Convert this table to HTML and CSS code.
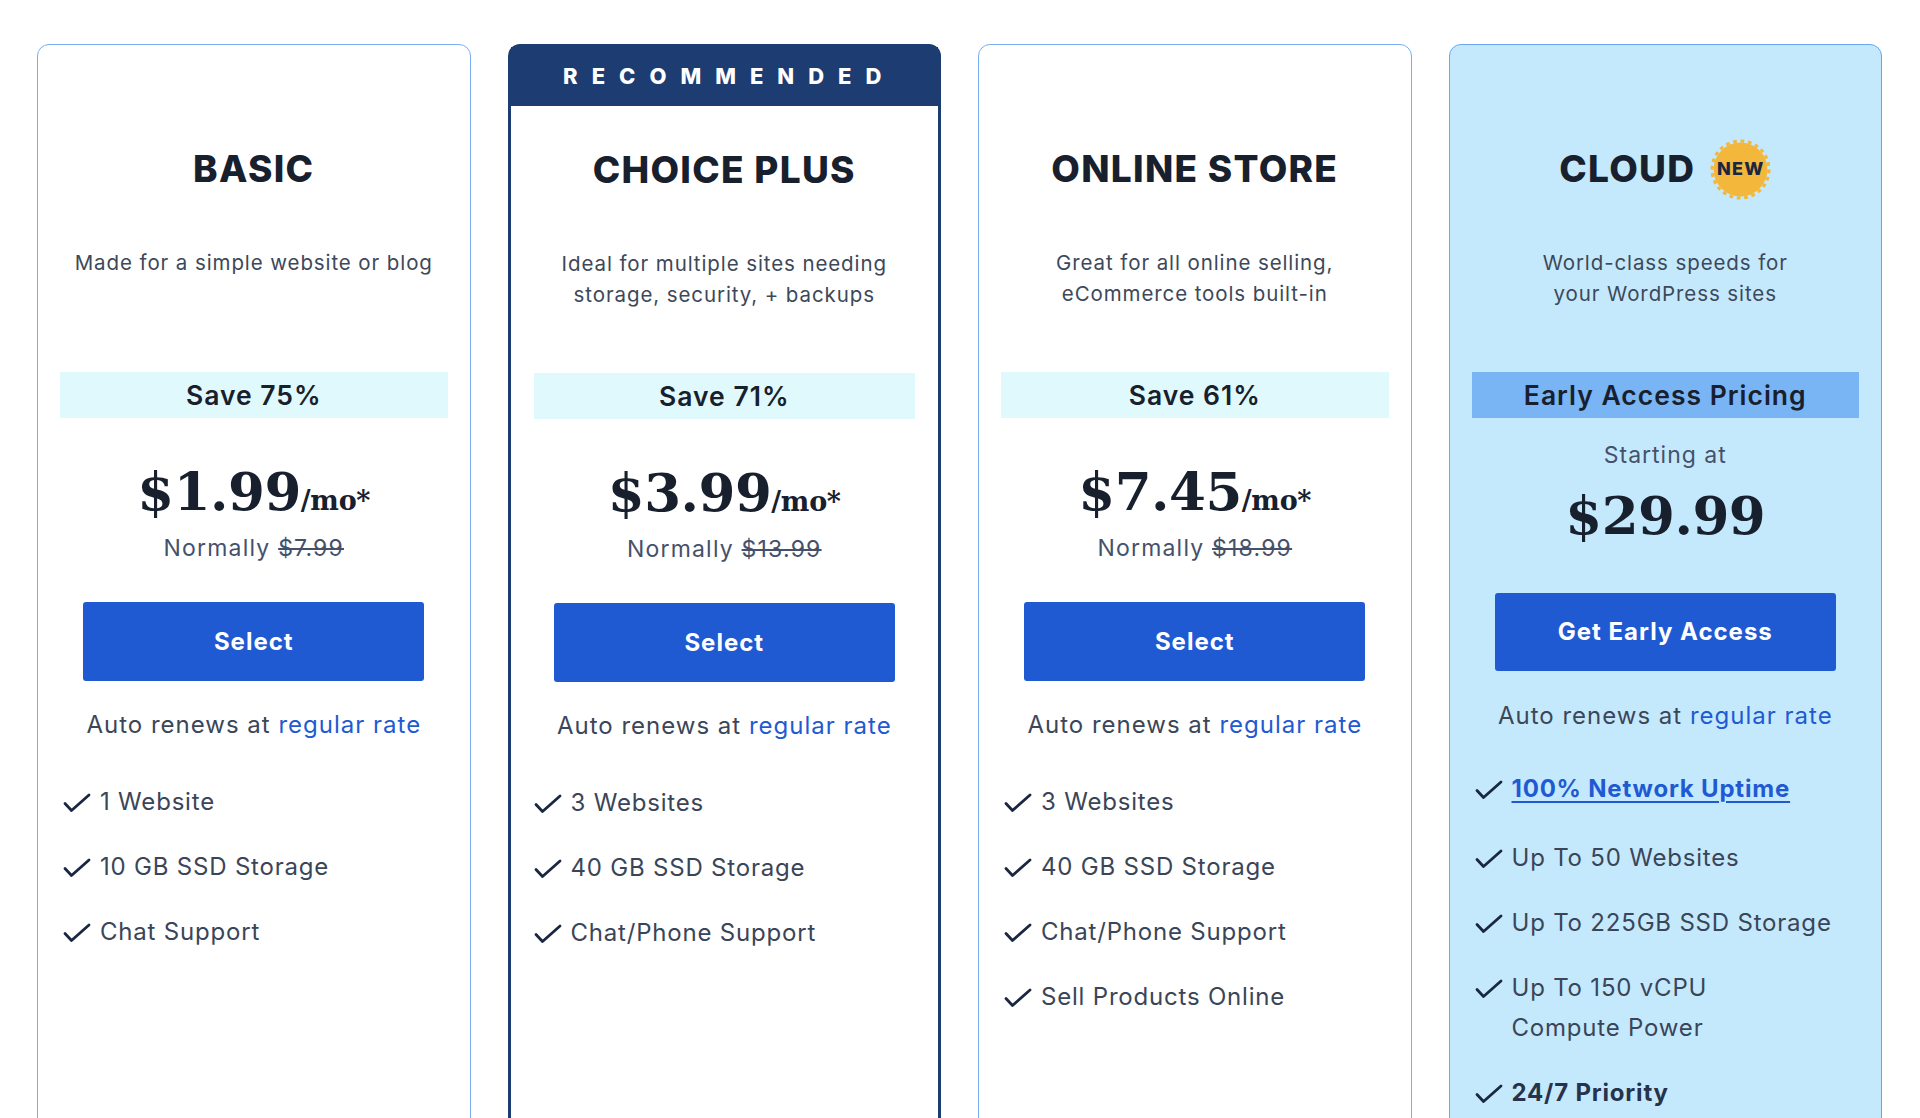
FILE: index.html
```html
<!DOCTYPE html>
<html lang="en">
<head>
<meta charset="utf-8">
<title>Hosting plans</title>
<link rel="stylesheet" href="styles.css">
</head>
<body>
<main class="plans">
  <section class="plan">
    <h2 class="plan-title">BASIC</h2>
    <p class="plan-desc">Made for a simple website or blog</p>
    <div class="plan-save">Save 75%</div>
    <div class="plan-price"><span class="amount">$1.99</span><span class="per">/mo*</span></div>
    <p class="plan-normal">Normally <s>$7.99</s></p>
    <a class="plan-btn" href="#">Select</a>
    <p class="plan-renew">Auto renews at <a href="#">regular rate</a></p>
    <ul class="plan-features">
      <li><svg class="check" viewBox="0 0 28 20"><polyline points="2,10.5 8.5,17.5 26,2"/></svg><span>1 Website</span></li>
      <li><svg class="check" viewBox="0 0 28 20"><polyline points="2,10.5 8.5,17.5 26,2"/></svg><span>10 GB SSD Storage</span></li>
      <li><svg class="check" viewBox="0 0 28 20"><polyline points="2,10.5 8.5,17.5 26,2"/></svg><span>Chat Support</span></li>
    </ul>
  </section>

  <section class="plan plan--featured">
    <div class="plan-ribbon">RECOMMENDED</div>
    <h2 class="plan-title">CHOICE PLUS</h2>
    <p class="plan-desc">Ideal for multiple sites needing<br>storage, security, + backups</p>
    <div class="plan-save">Save 71%</div>
    <div class="plan-price"><span class="amount">$3.99</span><span class="per">/mo*</span></div>
    <p class="plan-normal">Normally <s>$13.99</s></p>
    <a class="plan-btn" href="#">Select</a>
    <p class="plan-renew">Auto renews at <a href="#">regular rate</a></p>
    <ul class="plan-features">
      <li><svg class="check" viewBox="0 0 28 20"><polyline points="2,10.5 8.5,17.5 26,2"/></svg><span>3 Websites</span></li>
      <li><svg class="check" viewBox="0 0 28 20"><polyline points="2,10.5 8.5,17.5 26,2"/></svg><span>40 GB SSD Storage</span></li>
      <li><svg class="check" viewBox="0 0 28 20"><polyline points="2,10.5 8.5,17.5 26,2"/></svg><span>Chat/Phone Support</span></li>
    </ul>
  </section>

  <section class="plan">
    <h2 class="plan-title">ONLINE STORE</h2>
    <p class="plan-desc">Great for all online selling,<br>eCommerce tools built-in</p>
    <div class="plan-save">Save 61%</div>
    <div class="plan-price"><span class="amount">$7.45</span><span class="per">/mo*</span></div>
    <p class="plan-normal">Normally <s>$18.99</s></p>
    <a class="plan-btn" href="#">Select</a>
    <p class="plan-renew">Auto renews at <a href="#">regular rate</a></p>
    <ul class="plan-features">
      <li><svg class="check" viewBox="0 0 28 20"><polyline points="2,10.5 8.5,17.5 26,2"/></svg><span>3 Websites</span></li>
      <li><svg class="check" viewBox="0 0 28 20"><polyline points="2,10.5 8.5,17.5 26,2"/></svg><span>40 GB SSD Storage</span></li>
      <li><svg class="check" viewBox="0 0 28 20"><polyline points="2,10.5 8.5,17.5 26,2"/></svg><span>Chat/Phone Support</span></li>
      <li><svg class="check" viewBox="0 0 28 20"><polyline points="2,10.5 8.5,17.5 26,2"/></svg><span>Sell Products Online</span></li>
    </ul>
  </section>

  <section class="plan plan--cloud">
    <div class="plan-title plan-title--badge">
      <h2 class="plan-title-text">CLOUD</h2>
      <span class="badge">
        <svg class="badge-seal" viewBox="0 0 60 60"><circle cx="30" cy="30" r="26.5"/><circle class="teeth" cx="30" cy="30" r="28" /></svg>
        <span class="badge-text">NEW</span>
      </span>
    </div>
    <p class="plan-desc">World-class speeds for<br>your WordPress sites</p>
    <div class="plan-save plan-save--early">Early Access Pricing</div>
    <p class="plan-starting">Starting at</p>
    <div class="plan-price plan-price--cloud"><span class="amount">$29.99</span></div>
    <a class="plan-btn plan-btn--cloud" href="#">Get Early Access</a>
    <p class="plan-renew plan-renew--cloud">Auto renews at <a href="#">regular rate</a></p>
    <ul class="plan-features plan-features--cloud">
      <li class="feature-link"><svg class="check" viewBox="0 0 28 20"><polyline points="2,10.5 8.5,17.5 26,2"/></svg><a href="#">100% Network Uptime</a></li>
      <li><svg class="check" viewBox="0 0 28 20"><polyline points="2,10.5 8.5,17.5 26,2"/></svg><span>Up To 50 Websites</span></li>
      <li><svg class="check" viewBox="0 0 28 20"><polyline points="2,10.5 8.5,17.5 26,2"/></svg><span>Up To 225GB SSD Storage</span></li>
      <li><svg class="check" viewBox="0 0 28 20"><polyline points="2,10.5 8.5,17.5 26,2"/></svg><span>Up To 150 vCPU<br>Compute Power</span></li>
      <li class="feature-strong"><svg class="check" viewBox="0 0 28 20"><polyline points="2,10.5 8.5,17.5 26,2"/></svg><span>24/7 Priority</span></li>
    </ul>
  </section>
</main>
</body>
</html>
```

FILE: styles.css
```css
* { box-sizing: border-box; }

body {
  margin: 0;
  background: #ffffff;
  font-family: Inter, "Noto Sans", "Liberation Sans", sans-serif;
  color: #3b4659;
  overflow: hidden;
}

.plans {
  display: grid;
  grid-template-columns: repeat(4, 1fr);
  column-gap: 37px;
  padding: 44px 38px 0 37px;
}

.plan {
  display: flex;
  flex-direction: column;
  align-items: stretch;
  min-height: 1160px;
  padding: 102px 22px 40px;
  border: 1px solid #7aaef0;
  border-radius: 12px;
  background: #ffffff;
  text-align: center;
}

.plan--featured {
  padding-top: 0;
  padding-left: 20px;
  padding-right: 20px;
  border: 3px solid #1c3c72;
}

.plan--featured .plan-save {
  margin: 0 3px;
}

.plan--cloud {
  background: #c5e9fc;
  border-color: #6aa6ee;
}

.plan-ribbon {
  height: 59px;
  margin: 0 -20px 42px;
  background: #1c3c72;
  color: #ffffff;
  font-weight: 800;
  font-size: 22px;
  line-height: 59px;
  letter-spacing: 14px;
  padding-left: 10px;
}

.plan-title {
  margin: 0;
  height: 44px;
  font-size: 37px;
  line-height: 44px;
  font-weight: 800;
  letter-spacing: 1.3px;
  color: #18202e;
}

.plan-title--badge {
  display: flex;
  justify-content: center;
  align-items: center;
  gap: 15px;
}

.plan-title-text {
  margin: 0;
  font: inherit;
  letter-spacing: inherit;
}

.badge {
  position: relative;
  width: 61px;
  height: 61px;
  flex: none;
}

.badge-seal {
  width: 61px;
  height: 61px;
  display: block;
  fill: #f2b73b;
}

.badge-seal .teeth {
  fill: none;
  stroke: #f2b73b;
  stroke-width: 3;
  stroke-dasharray: 3.66 3.66;
}

.badge-text {
  position: absolute;
  inset: 0;
  display: flex;
  align-items: center;
  justify-content: center;
  font-size: 18px;
  font-weight: 800;
  color: #1a2740;
}

.plan-desc {
  margin: 57px 0 0;
  height: 124px;
  font-size: 20.5px;
  line-height: 30.5px;
  letter-spacing: 0.9px;
  color: #3d4859;
}

.plan-save {
  height: 46px;
  background: #e0f9fc;
  color: #18202e;
  font-size: 26.5px;
  line-height: 46px;
  font-weight: 600;
  letter-spacing: 1px;
}

.plan-save--early {
  background: #79b4f5;
}

.plan-price {
  margin-top: 43px;
  height: 60px;
  line-height: 60px;
  font-family: "DejaVu Serif", "Liberation Serif", serif;
  font-weight: 700;
  color: #18202e;
  white-space: nowrap;
}

.amount {
  font-size: 53px;
  letter-spacing: -0.5px;
}

.per {
  font-size: 27px;
  line-height: 1;
  letter-spacing: -0.3px;
}

.plan-normal {
  margin: 12px 0 0;
  font-size: 23px;
  line-height: 30px;
  letter-spacing: 1.2px;
  color: #45516a;
}

.plan-normal s {
  text-decoration-thickness: 1.5px;
}

.plan-starting {
  margin: 22px 0 0;
  font-size: 23px;
  line-height: 30px;
  letter-spacing: 1px;
  color: #45516a;
}

.plan-price--cloud {
  margin-top: 15px;
}

.plan-btn {
  display: block;
  align-self: center;
  width: 341px;
  height: 79px;
  margin-top: 39px;
  background: #1f5ad3;
  border-radius: 3px;
  color: #ffffff;
  text-decoration: none;
  font-size: 24px;
  line-height: 79px;
  font-weight: 700;
  letter-spacing: 1px;
}

.plan-btn--cloud {
  margin-top: 48px;
  height: 78px;
  line-height: 78px;
}

.plan-renew {
  margin: 26px 0 0;
  font-size: 24px;
  line-height: 36px;
  letter-spacing: 1px;
  color: #3b4659;
}

.plan-renew--cloud {
  margin-top: 27px;
}

.plan-renew a {
  color: #1f5ad3;
  text-decoration: none;
}

.plan-features {
  list-style: none;
  margin: 39px 0 0;
  padding: 0 0 0 3px;
  display: flex;
  flex-direction: column;
  gap: 25px;
  text-align: left;
}

.plan-features--cloud {
  margin-top: 35px;
}

.plan-features li {
  display: flex;
  align-items: flex-start;
  gap: 9px;
  font-size: 24px;
  line-height: 40px;
  letter-spacing: 0.8px;
  color: #3a4558;
}

.check {
  flex: none;
  width: 28px;
  height: 20px;
  margin-top: 11px;
  fill: none;
  stroke: #1a2740;
  stroke-width: 2.8;
  stroke-linecap: round;
  stroke-linejoin: round;
}

.feature-link {
  margin-bottom: 4px;
}

.feature-link a {
  color: #1f5ad3;
  font-weight: 700;
  text-decoration: underline;
  text-decoration-thickness: 2px;
  text-underline-offset: 4px;
}

.feature-strong span {
  font-weight: 700;
  color: #27334a;
}
```
